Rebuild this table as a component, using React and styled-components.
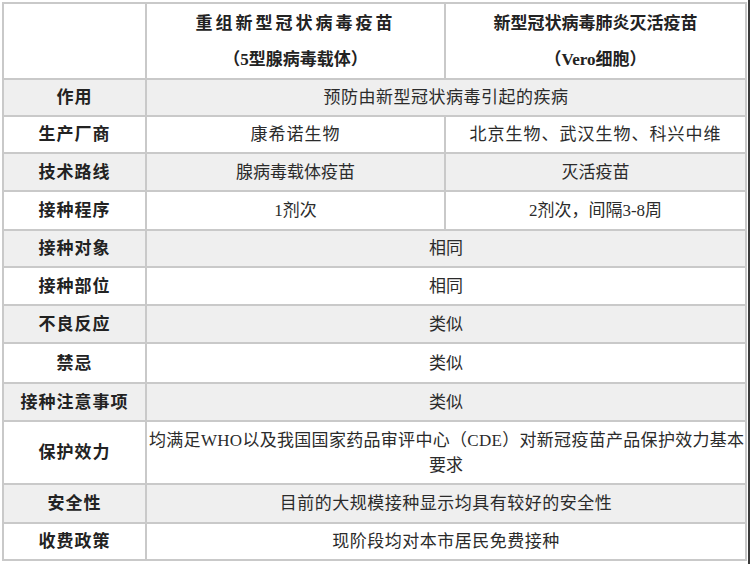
import styled, { createGlobalStyle } from 'styled-components';

const GlobalStyle = createGlobalStyle`
  html, body {
    margin: 0;
    padding: 0;
    background: #ffffff;
  }
`;

const Page = styled.div`
  box-sizing: border-box;
  width: 750px;
  min-height: 100vh;
  padding: 2px 3px 0 2px;
  border-right: 2px solid #3a3a3a;
  font-family: 'Liberation Serif', 'Noto Sans CJK SC', serif;
  color: #2b2b2b;
`;

const Table = styled.table`
  border-collapse: collapse;
  width: 743px;
  table-layout: fixed;
`;

const Row = styled.tr`
  height: ${(p) => p.$h || 38}px;
  background: ${(p) => (p.$grey ? '#efefef' : '#ffffff')};
`;

const Cell = styled.td`
  border: 2px solid #c9c9c9;
  padding: 0 2px;
  text-align: center;
  vertical-align: middle;
  font-size: 17px;
  line-height: 25px;
  letter-spacing: ${(p) => p.$spacing || 0}px;
`;

const Label = styled(Cell)`
  font-weight: bold;
  color: #222222;
  letter-spacing: 1px;
`;

const HeadCell = styled(Cell)`
  font-weight: bold;
  color: #222222;
  line-height: 36px;
  padding-top: 2px;
`;

const Line = styled.span`
  white-space: nowrap;
  letter-spacing: ${(p) => p.$spacing || 0}px;
`;

const rows = [
  { label: '作用', span: '预防由新型冠状病毒引起的疾病', grey: true, h: 37, spacing: 0.5 },
  { label: '生产厂商', a: '康希诺生物', b: '北京生物、武汉生物、科兴中维', h: 37, spacing: 1 },
  { label: '技术路线', a: '腺病毒载体疫苗', b: '灭活疫苗', grey: true, h: 38 },
  { label: '接种程序', a: '1剂次', b: '2剂次，间隔3-8周', h: 39 },
  { label: '接种对象', span: '相同', grey: true, h: 37 },
  { label: '接种部位', span: '相同', h: 38 },
  { label: '不良反应', span: '类似', grey: true, h: 38 },
  { label: '禁忌', span: '类似', h: 40 },
  { label: '接种注意事项', span: '类似', grey: true, h: 38 },
  {
    label: '保护效力',
    span: (
      <>
        <Line $spacing={0.3}>均满足WHO以及我国国家药品审评中心（CDE）对新冠疫苗产品保护效力基本</Line>
        <br />
        要求
      </>
    ),
    h: 63,
  },
  { label: '安全性', span: '目前的大规模接种显示均具有较好的安全性', grey: true, h: 39, spacing: 0.5 },
  { label: '收费政策', span: '现阶段均对本市居民免费接种', h: 37, spacing: 0.5 },
];

const App = () => {
  return (
    <Page>
      <GlobalStyle />
      <Table>
        <colgroup>
          <col style={{ width: 143 }} />
          <col style={{ width: 299 }} />
          <col style={{ width: 301 }} />
        </colgroup>
        <tbody>
          <Row $h={76}>
            <HeadCell />
            <HeadCell>
              <Line $spacing={3}>重组新型冠状病毒疫苗</Line>
              <br />
              （5型腺病毒载体）
            </HeadCell>
            <HeadCell>
              新型冠状病毒肺炎灭活疫苗
              <br />
              （Vero细胞）
            </HeadCell>
          </Row>
          {rows.map((r) => (
            <Row key={r.label} $grey={r.grey} $h={r.h}>
              <Label>{r.label}</Label>
              {r.span ? (
                <Cell colSpan={2} $spacing={r.spacing}>
                  {r.span}
                </Cell>
              ) : (
                <>
                  <Cell $spacing={r.spacing}>{r.a}</Cell>
                  <Cell $spacing={r.spacing}>{r.b}</Cell>
                </>
              )}
            </Row>
          ))}
        </tbody>
      </Table>
    </Page>
  );
};

export default App;
